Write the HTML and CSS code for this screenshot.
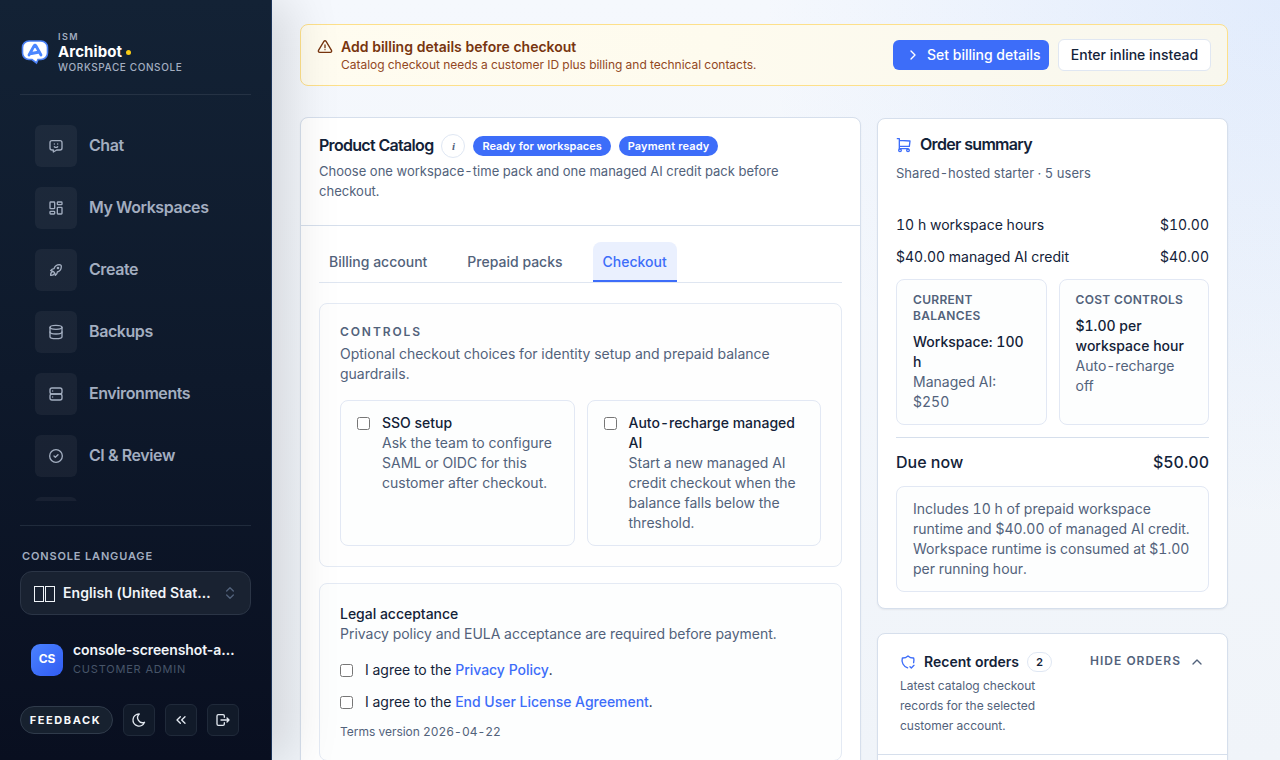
FILE: index.html
```
<!DOCTYPE html>
<html lang="en">
<head>
    <meta charset="UTF-8">
    <meta name="viewport" content="width=device-width, initial-scale=1.0">
    <title>Archibot Workspace Console</title>
    <link rel="stylesheet" href="styles.css">
</head>
<body>

    <aside class="sidebar">
        <div class="brand">
            <svg class="brand-logo" viewBox="0 0 28 28">
                <path d="M8 2h12a6.500 6.500 0 0 1 6.500 6.500v5.500a6.500 6.500 0 0 1 -6.500 6.500h-3l-1.500 3.500l-4.500 -3.500h-3a6.500 6.500 0 0 1 -6.500 -6.500v-5.500a6.500 6.500 0 0 1 6.500 -6.500z" fill="#fff" stroke="#4a80f5" stroke-width="1.600"/>
                <path d="M8 16l5 -9q1 -1.500 2 0l5 9M10.500 14.500l8 -1.500" fill="none" stroke="#4a86ff" stroke-width="2.800" stroke-linecap="round" stroke-linejoin="round"/>
            </svg>
            <div class="brand-text">
                <span class="brand-over">ISM</span>
                <span class="brand-name">Archibot<i class="dot"></i></span>
                <span class="brand-sub">WORKSPACE CONSOLE</span>
            </div>
        </div>

        <nav class="nav">
            <a class="nav-item" href="#"><span class="nav-icon"><svg class="icon" viewBox="0 0 24 24"><path d="M18 4a3 3 0 0 1 3 3v8a3 3 0 0 1 -3 3h-5l-5 3v-3h-2a3 3 0 0 1 -3 -3v-8a3 3 0 0 1 3 -3z"/><path d="M9.500 9h.01M14.500 9h.01M9.500 13a3.500 3.500 0 0 0 5 0"/></svg></span><span class="nav-text">Chat</span></a>
            <a class="nav-item" href="#"><span class="nav-icon"><svg class="icon" viewBox="0 0 24 24"><rect x="3" y="3" width="7" height="10" rx="1"/><rect x="3" y="17" width="7" height="4" rx="1"/><rect x="14" y="11" width="7" height="10" rx="1"/><rect x="14" y="3" width="7" height="4" rx="1"/></svg></span><span class="nav-text">My Workspaces</span></a>
            <a class="nav-item" href="#"><span class="nav-icon"><svg class="icon" viewBox="0 0 24 24"><path d="M4 13a8 8 0 0 1 7 7a6 6 0 0 0 3 -5a9 9 0 0 0 6 -8a3 3 0 0 0 -3 -3a9 9 0 0 0 -8 6a6 6 0 0 0 -5 3"/><path d="M7 14a6 6 0 0 0 -3 6a6 6 0 0 0 6 -3"/><circle cx="15" cy="9" r="1"/></svg></span><span class="nav-text">Create</span></a>
            <a class="nav-item" href="#"><span class="nav-icon"><svg class="icon" viewBox="0 0 24 24"><ellipse cx="12" cy="5" rx="9" ry="3"/><path d="M3 5v7c0 1.660 4 3 9 3s9 -1.340 9 -3v-7"/><path d="M3 12v7c0 1.660 4 3 9 3s9 -1.340 9 -3v-7"/></svg></span><span class="nav-text">Backups</span></a>
            <a class="nav-item" href="#"><span class="nav-icon"><svg class="icon" viewBox="0 0 24 24"><rect x="3" y="3" width="18" height="9" rx="3"/><rect x="3" y="12" width="18" height="9" rx="3"/><path d="M7 7.500v.01M7 16.500v.01"/></svg></span><span class="nav-text">Environments</span></a>
            <a class="nav-item" href="#"><span class="nav-icon"><svg class="icon" viewBox="0 0 24 24"><circle cx="12" cy="12" r="9.500"/><path d="M9 12l2 2l4 -4"/></svg></span><span class="nav-text">CI &amp; Review</span></a>
            <a class="nav-item" href="#"><span class="nav-icon"></span></a>
        </nav>

        <div class="side-foot">
            <div class="lang-label">CONSOLE LANGUAGE</div>
            <div class="lang-select">
                <span class="flag"><i></i><i></i></span>
                <span class="lang-name">English (United States)</span>
                <svg class="icon" viewBox="0 0 24 24"><path d="M7 9l5 -5l5 5M17 15l-5 5l-5 -5"/></svg>
            </div>
            <div class="user">
                <div class="avatar">CS</div>
                <div class="user-text">
                    <div class="user-name">console-screenshot-admin</div>
                    <div class="user-role">CUSTOMER ADMIN</div>
                </div>
            </div>
            <div class="tools">
                <button class="feedback">FEEDBACK</button>
                <button class="tool"><svg class="icon" viewBox="0 0 24 24"><path d="M12 3h.390a7.500 7.500 0 0 0 7.920 12.450a9 9 0 1 1 -8.310 -12.450z"/></svg></button>
                <button class="tool"><svg class="icon" viewBox="0 0 24 24"><path d="M11 7l-5 5l5 5M18 7l-5 5l5 5"/></svg></button>
                <button class="tool"><svg class="icon" viewBox="0 0 24 24"><path d="M14 8v-2a2 2 0 0 0 -2 -2h-7a2 2 0 0 0 -2 2v12a2 2 0 0 0 2 2h7a2 2 0 0 0 2 -2v-2"/><path d="M9 12h12l-3 -3M18 15l3 -3"/></svg></button>
            </div>
        </div>
    </aside>

    <main class="main">
        <section class="alert">
            <svg class="icon" viewBox="0 0 24 24"><path d="M12 9v4M12 16v.01"/><path d="M10.360 3.590l-8.110 13.540a1.910 1.910 0 0 0 1.640 2.870h16.220a1.910 1.910 0 0 0 1.640 -2.870l-8.110 -13.540a1.910 1.910 0 0 0 -3.280 0z"/></svg>
            <div class="alert-text">
                <div class="alert-title">Add billing details before checkout</div>
                <div class="alert-desc">Catalog checkout needs a customer ID plus billing and technical contacts.</div>
            </div>
            <button class="btn btn-primary"><svg class="icon" viewBox="0 0 24 24"><path d="M9 6l6 6l-6 6"/></svg>Set billing details</button>
            <button class="btn btn-plain">Enter inline instead</button>
        </section>

        <div class="columns">
            <section class="card catalog">
                <div class="catalog-head">
                    <div class="title-row">
                        <h2>Product Catalog</h2>
                        <span class="info">i</span>
                        <span class="pill">Ready for workspaces</span>
                        <span class="pill">Payment ready</span>
                    </div>
                    <p class="sub">Choose one workspace-time pack and one managed AI credit pack before checkout.</p>
                </div>
                <div class="catalog-body">
                    <div class="tabs">
                        <a class="tab" href="#">Billing account</a>
                        <a class="tab" href="#">Prepaid packs</a>
                        <a class="tab active" href="#">Checkout</a>
                    </div>

                    <div class="panel">
                        <div class="eyebrow">CONTROLS</div>
                        <p class="muted">Optional checkout choices for identity setup and prepaid balance guardrails.</p>
                        <div class="options">
                            <label class="option">
                                <input type="checkbox">
                                <span><b>SSO setup</b><span class="muted">Ask the team to configure SAML or OIDC for this customer after checkout.</span></span>
                            </label>
                            <label class="option">
                                <input type="checkbox">
                                <span><b>Auto-recharge managed AI</b><span class="muted">Start a new managed AI credit checkout when the balance falls below the threshold.</span></span>
                            </label>
                        </div>
                    </div>

                    <div class="panel legal">
                        <b>Legal acceptance</b>
                        <p class="muted">Privacy policy and EULA acceptance are required before payment.</p>
                        <label class="agree"><input type="checkbox"><span>I agree to the <a href="#">Privacy Policy</a>.</span></label>
                        <label class="agree"><input type="checkbox"><span>I agree to the <a href="#">End User License Agreement</a>.</span></label>
                        <div class="terms">Terms version 2026-04-22</div>
                    </div>
                </div>
            </section>

            <div class="side-col">
                <section class="card summary">
                    <div class="summary-title">
                        <svg class="icon" viewBox="0 0 24 24"><circle cx="6" cy="20" r="2"/><circle cx="18" cy="20" r="2"/><path d="M18 17.500h-13v-15h-3M5 5l16 1l-1 8h-15"/></svg>
                        <h2>Order summary</h2>
                    </div>
                    <p class="sub">Shared-hosted starter · 5 users</p>
                    <div class="line first"><span>10 h workspace hours</span><span>$10.00</span></div>
                    <div class="line"><span>$40.00 managed AI credit</span><span>$40.00</span></div>
                    <div class="stats">
                        <div class="stat">
                            <div class="stat-label">CURRENT BALANCES</div>
                            <b>Workspace: 100 h</b>
                            <div class="muted">Managed AI: $250</div>
                        </div>
                        <div class="stat">
                            <div class="stat-label">COST CONTROLS</div>
                            <b>$1.00 per workspace hour</b>
                            <div class="muted">Auto-recharge off</div>
                        </div>
                    </div>
                    <div class="due"><span>Due now</span><span>$50.00</span></div>
                    <div class="note">Includes 10 h of prepaid workspace runtime and $40.00 of managed AI credit. Workspace runtime is consumed at $1.00 per running hour.</div>
                </section>

                <section class="card orders">
                    <div class="orders-head">
                        <div class="orders-left">
                            <div class="orders-title">
                                <svg class="icon" viewBox="0 0 24 24"><path d="M11.460 20.850a12 12 0 0 1 -7.960 -14.850a12 12 0 0 0 8.500 -3a12 12 0 0 0 8.500 3a12 12 0 0 1 -.090 7.060"/><path d="M15 19l2 2l4 -4"/></svg>
                                <h3>Recent orders</h3>
                                <span class="count">2</span>
                            </div>
                            <p>Latest catalog checkout records for the selected customer account.</p>
                        </div>
                        <div class="toggle">HIDE ORDERS<svg class="icon" viewBox="0 0 24 24"><path d="M6 15l6 -6l6 6"/></svg></div>
                    </div>
                    <div class="orders-body"></div>
                </section>
            </div>
        </div>
    </main>

</body>
</html>
```
FILE: styles.css
```
* {
    margin: 0;
    padding: 0;
    box-sizing: border-box;
}

body {
    display: flex;
    height: 760px;
    overflow: hidden;
    font-family: Inter, sans-serif;
    font-size: 14px;
    line-height: 20px;
    color: #132238;
    background: radial-gradient(circle at 100% 0, rgba(59, 130, 246, 0.1), transparent 520px), linear-gradient(180deg, #f5f8fd, #f0f4f9);
}

button {
    font-family: inherit;
}

a {
    color: #3d6df9;
    text-decoration: none;
}

b {
    display: block;
    font-weight: 500;
}

.icon {
    width: 16px;
    height: 16px;
    flex-shrink: 0;
    fill: none;
    stroke: currentColor;
    stroke-width: 2;
    stroke-linecap: round;
    stroke-linejoin: round;
}

/* Sidebar */
.sidebar {
    position: relative;
    z-index: 2;
    width: 272px;
    height: 760px;
    flex-shrink: 0;
    display: flex;
    flex-direction: column;
    padding: 24px 20px;
    border-right: 1px solid #1c3459;
    background: linear-gradient(180deg, #132235, #0e192b 50%, #090f20);
    box-shadow: 18px 0 48px rgba(0, 0, 0, 0.13);
    color: #a3aec0;
}

.brand {
    display: flex;
    align-items: center;
    gap: 9px;
    height: 71px;
    padding: 2px 1px 15px;
    border-bottom: 1px solid #253244;
}

.brand-logo {
    width: 28px;
    height: 28px;
}

.brand-text {
    display: flex;
    flex-direction: column;
}

.brand-over {
    font-size: 9px;
    line-height: 12px;
    font-weight: 600;
    letter-spacing: 1.4px;
}

.brand-name {
    display: flex;
    align-items: center;
    gap: 4px;
    font-size: 15px;
    line-height: 18px;
    font-weight: 700;
    letter-spacing: 0.1px;
    color: #fff;
}

.dot {
    width: 5px;
    height: 5px;
    border-radius: 50%;
    background: #facc15;
}

.brand-sub {
    font-size: 10px;
    line-height: 13px;
    font-weight: 500;
    letter-spacing: 0.6px;
}

.nav {
    height: 406px;
    padding-top: 20px;
    overflow: hidden;
}

.nav-item {
    display: flex;
    align-items: center;
    gap: 12px;
    height: 62px;
    padding: 0 15px;
    font-size: 16px;
    font-weight: 600;
    letter-spacing: -0.42px;
    color: #a3aec0;
}

.nav-text {
    padding-bottom: 2px;
}

.nav-icon {
    display: flex;
    align-items: center;
    justify-content: center;
    width: 42px;
    height: 42px;
    border-radius: 6px;
    background: rgba(255, 255, 255, 0.05);
}

.side-foot {
    margin-top: 24px;
    border-top: 1px solid #202b3c;
    padding-top: 20px;
}

.lang-label {
    padding-left: 2px;
    font-size: 11px;
    font-weight: 600;
    letter-spacing: 0.85px;
}

.lang-select {
    display: flex;
    align-items: center;
    height: 44px;
    margin-top: 5px;
    padding: 0 12px;
    border: 1px solid #2b3546;
    border-radius: 12px;
    background: #192231;
    color: #f1f5f9;
    font-weight: 600;
}

.flag {
    display: flex;
    gap: 1px;
    width: 22px;
    margin-right: 8px;
    padding: 2px 0 0 1px;
}

.flag i {
    width: 10px;
    height: 16px;
    border: 1px solid #f1f5f9;
}

.lang-name {
    width: 149px;
    overflow: hidden;
    text-overflow: ellipsis;
    white-space: nowrap;
    letter-spacing: 0.06px;
}

.lang-select .icon {
    margin-left: auto;
    color: #52627b;
}

.user {
    display: flex;
    align-items: center;
    gap: 10px;
    margin-top: 24px;
    padding: 0 11px;
}

.avatar {
    width: 32px;
    height: 32px;
    flex-shrink: 0;
    margin-top: 2px;
    border-radius: 9px;
    background: linear-gradient(135deg, #4a82ff, #315cf3);
    color: #fff;
    font-size: 12px;
    font-weight: 700;
    line-height: 30px;
    text-align: center;
}

.user-text {
    width: 164px;
    margin-right: -10px;
}

.user-name {
    overflow: hidden;
    text-overflow: ellipsis;
    white-space: nowrap;
    font-weight: 600;
    line-height: 22px;
    letter-spacing: -0.1px;
    color: #f1f5f9;
}

.user-role {
    font-size: 11px;
    line-height: 16px;
    padding-bottom: 2px;
    letter-spacing: 0.8px;
    color: #475569;
}

.tools {
    display: flex;
    align-items: center;
    gap: 10px;
    margin-top: 25px;
}

.feedback {
    width: 93px;
    height: 28px;
    padding-right: 2px;
    border: 1px solid #303b4b;
    border-radius: 14px;
    background: #17212f;
    color: #f8fafc;
    font-size: 11px;
    font-weight: 700;
    letter-spacing: 1.6px;
}

.tool {
    display: flex;
    align-items: center;
    justify-content: center;
    width: 32px;
    height: 32px;
    border: 1px solid #202a3a;
    border-radius: 6px;
    background: #111a29;
    color: #e2e8f0;
}

/* Main */
.main {
    flex: 1;
    height: 760px;
    overflow: hidden;
    padding: 24px 52px 0 28px;
    font-variant-numeric: tabular-nums;
}

.alert {
    display: flex;
    align-items: center;
    height: 62px;
    padding: 0 16px;
    border: 1px solid #fde08a;
    border-radius: 8px;
    background: linear-gradient(90deg, #fffcf0, #fefbee 45%, #f8f7ee);
    color: #78350f;
}

.alert > .icon {
    align-self: flex-start;
    margin: 14px 8px 0 0;
}

.alert-text {
    flex: 1;
}

.alert-title {
    font-weight: 600;
}

.alert-desc {
    font-size: 12px;
    line-height: 16px;
    letter-spacing: -0.02px;
    color: #92481f;
}

.btn {
    display: flex;
    align-items: center;
    border-radius: 6px;
    padding-bottom: 1px;
    font-size: 14px;
    font-weight: 500;
}

.btn-primary {
    gap: 6px;
    width: 156px;
    height: 30px;
    padding-left: 12px;
    border: none;
    background: #3d6df9;
    color: #fff;
}

.btn-plain {
    justify-content: center;
    width: 153px;
    height: 32px;
    margin-left: 9px;
    border: 1px solid #e0e7f2;
    background: #fff;
    color: #132238;
}

.columns {
    display: grid;
    grid-template-columns: 561px 351px;
    gap: 16px;
    align-items: start;
    margin-top: 31px;
}

.card {
    border: 1px solid #d6dfec;
    border-radius: 8px;
    background: #fff;
    box-shadow: 0 1px 2px rgba(15, 23, 42, 0.06);
}

h2 {
    padding-bottom: 2px;
    font-size: 16px;
    font-weight: 600;
    letter-spacing: -0.7px;
}

.sub {
    font-size: 13px;
    letter-spacing: 0.02px;
    color: #52627b;
}

.muted {
    color: #52627b;
}

.catalog-head {
    height: 108px;
    padding: 16px 18px;
    border-bottom: 1px solid #d6dfec;
}

.title-row {
    display: flex;
    align-items: center;
    height: 24px;
    margin-bottom: 3px;
    gap: 8px;
}

.info {
    width: 24px;
    height: 24px;
    border: 1px solid #dfe7f3;
    border-radius: 50%;
    font: italic 700 11px/22px "Liberation Serif", serif;
    text-align: center;
    color: #52627b;
}

.pill {
    padding: 0 9px;
    border-radius: 10px;
    background: #3d6df9;
    color: #fff;
    font-size: 11px;
    font-weight: 600;
}

.pill + .pill {
    letter-spacing: 0.12px;
}

.catalog-body {
    padding: 16px 18px;
}

.tabs {
    display: flex;
    gap: 20px;
    height: 41px;
    border-bottom: 1px solid #dfe6f1;
}

.tab {
    height: 40px;
    padding: 0 10px;
    line-height: 40px;
    font-weight: 500;
    color: #52627b;
}

.tab.active {
    border-bottom: 2px solid #3d6df9;
    border-radius: 8px 8px 0 0;
    background: #eaf0fe;
    color: #3d6df9;
}

.panel {
    margin-top: 20px;
    padding: 20px;
    border: 1px solid #e4eaf4;
    border-radius: 8px;
    background: #fefefe;
}

.eyebrow {
    height: 20px;
    line-height: 15px;
    font-size: 12px;
    font-weight: 600;
    letter-spacing: 1.9px;
    color: #52627b;
}

.options {
    display: grid;
    grid-template-columns: 1fr 1fr;
    gap: 12px;
    margin-top: 16px;
}

.option {
    display: flex;
    gap: 12px;
    padding: 12px 16px;
    border: 1px solid #e2e8f4;
    border-radius: 8px;
    background: #fdfefe;
}

input {
    width: 13px;
    height: 13px;
    flex-shrink: 0;
}

.option input {
    margin-top: 4px;
}

.panel.legal {
    margin-top: 16px;
    background: #fdfefe;
    letter-spacing: -0.02px;
}

.agree {
    display: flex;
    align-items: center;
    gap: 12px;
    margin-top: 12px;
}

.muted + .agree {
    margin-top: 16px;
}

.agree a {
    font-weight: 500;
}

.terms {
    margin-top: 12px;
    font-size: 12px;
    line-height: 16px;
    color: #52627b;
}

/* Right column */
.side-col {
    display: flex;
    flex-direction: column;
    gap: 24px;
    padding-top: 1px;
}

.summary {
    height: 491px;
    padding: 16px 18px;
}

.summary-title {
    display: flex;
    align-items: center;
    gap: 8px;
    height: 20px;
    margin-bottom: 8px;
}

.summary-title .icon,
.orders-title .icon {
    color: #3d6df9;
}

.line,
.due {
    display: flex;
    justify-content: space-between;
}

.line {
    margin-top: 12px;
}

.line.first {
    margin-top: 32px;
}

.stats {
    display: grid;
    grid-template-columns: 1fr 1fr;
    gap: 12px;
    margin: 12px 0;
}

.stat {
    height: 146px;
    padding: 12px 16px;
    border: 1px solid #e2e8f4;
    border-radius: 8px;
    background: #fdfefe;
}

.stat-label {
    margin-bottom: 8px;
    font-size: 12px;
    line-height: 16px;
    font-weight: 600;
    letter-spacing: 0.3px;
    color: #52627b;
}

.due {
    padding: 12px 0;
    border-top: 1px solid #d6dfec;
    font-size: 16px;
    line-height: 24px;
    font-weight: 500;
}

.note {
    padding: 12px 16px;
    border: 1px solid #e2e8f4;
    border-radius: 8px;
    background: #fdfefe;
    color: #52627b;
}

.orders-head {
    display: flex;
    justify-content: space-between;
    height: 121px;
    padding: 18px 22px;
    border-bottom: 1px solid #d6dfec;
}

.orders-title {
    display: flex;
    align-items: center;
    gap: 8px;
    height: 20px;
}

h3 {
    font-size: 14px;
    font-weight: 600;
}

.count {
    width: 25px;
    height: 20px;
    border: 1px solid #dfe7f3;
    border-radius: 10px;
    font-size: 11px;
    font-weight: 600;
    line-height: 18px;
    text-align: center;
}

.orders-left p {
    width: 160px;
    margin-top: 4px;
    font-size: 12px;
    color: #52627b;
}

.toggle {
    display: flex;
    gap: 8px;
    height: 20px;
    line-height: 18px;
    font-size: 12px;
    font-weight: 600;
    letter-spacing: 1px;
    color: #52627b;
}

.toggle .icon {
    margin-top: 2px;
}

.orders-body {
    height: 20px;
}
```
